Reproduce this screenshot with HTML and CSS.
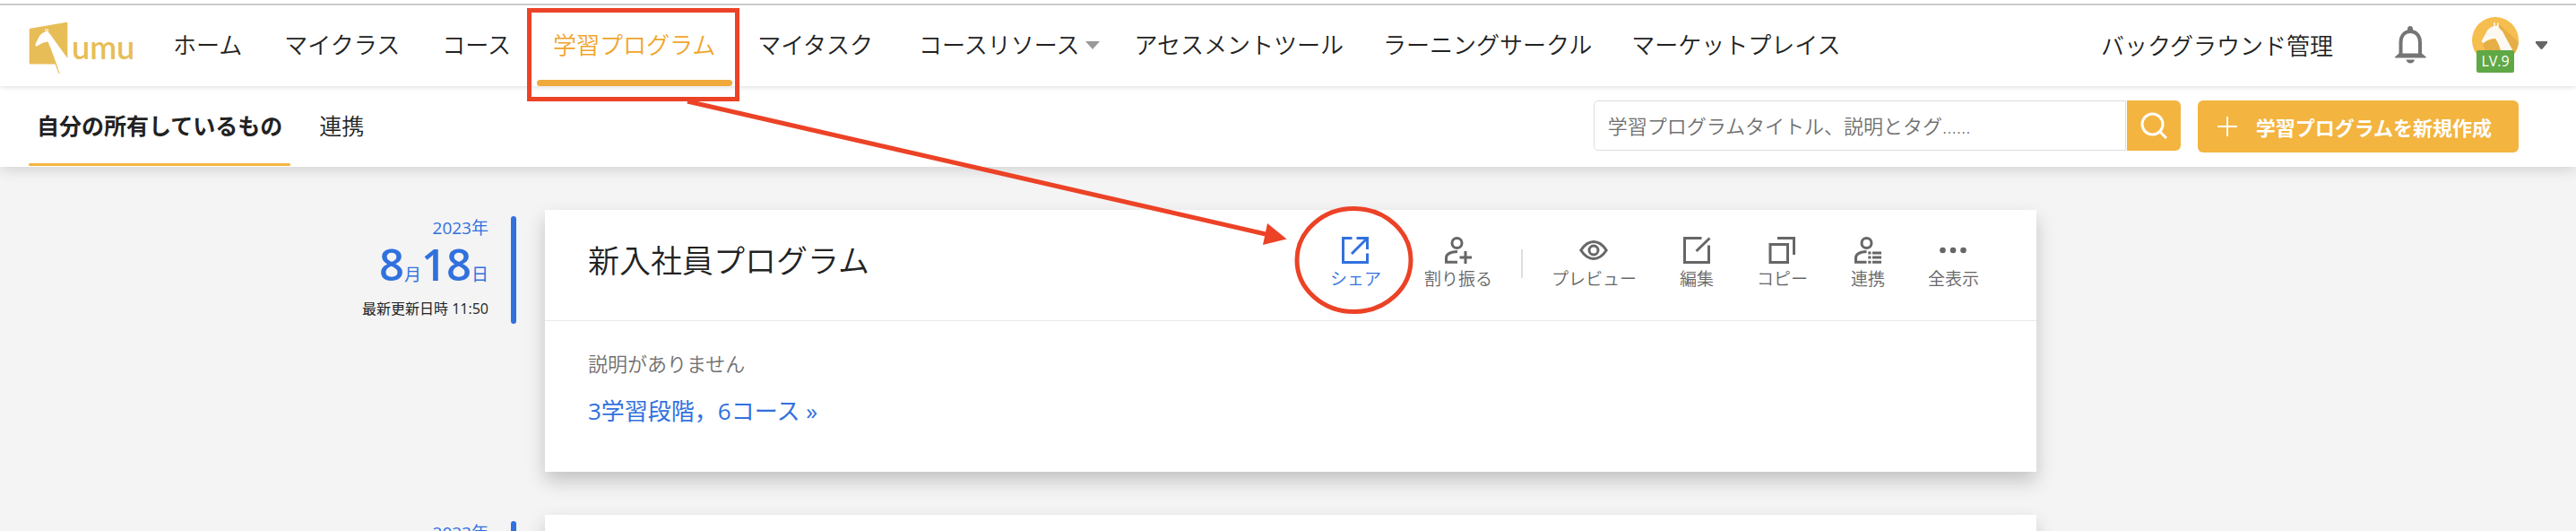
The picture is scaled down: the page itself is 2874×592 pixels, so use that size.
FILE: index.html
```html
<!DOCTYPE html>
<html lang="ja">
<head>
<meta charset="utf-8">
<title>学習プログラム</title>
<link rel="stylesheet" href="styles.css">
</head>
<body>
<header class="topbar">
  <a class="logo" href="#" aria-label="umu">
    <svg class="logo-mark" viewBox="38 43 131 175" aria-hidden="true"><path fill="#e7bd57" d="M40 70q0-3 3-4L164 45q3 0 3 3V165L110 86L103 78L102 67H98L99 76L95 75L96 67L92 68L93 77Q82 79 74 90L60 118Q59 127 67 124Q83 112 102 110Q120 152 141 216L138 216L126 184H43Q40 184 40 181Z"/></svg>
    <span class="logo-text">umu</span>
  </a>
  <nav class="nav">
    <a class="nav-item" href="#">ホーム</a>
    <a class="nav-item" href="#">マイクラス</a>
    <a class="nav-item" href="#">コース</a>
    <a class="nav-item nav-item-active" href="#" aria-current="page">学習プログラム</a>
    <a class="nav-item" href="#">マイタスク</a>
    <a class="nav-item nav-item-menu" href="#"><span>コースリソース</span><svg class="nav-caret" viewBox="0 0 16 9" aria-hidden="true"><path fill="#999" d="M0 0H16L8 9Z"/></svg></a>
    <a class="nav-item" href="#">アセスメントツール</a>
    <a class="nav-item" href="#">ラーニングサークル</a>
    <a class="nav-item" href="#">マーケットプレイス</a>
  </nav>
  <div class="account">
    <a class="admin-link" href="#">バックグラウンド管理</a>
    <button class="icon-button bell" type="button" aria-label="通知">
      <svg class="bell-icon" viewBox="0 0 35 42" aria-hidden="true"><g fill="#757575"><path d="M14 6V3.500a3 3.500 0 0 1 6 0V6Z"/><path d="M12.500 37.500h9.500q-1 4-4.750 4t-4.750-4Z"/><path d="M0 35.500V34.500L4.500 30.500H30L34.700 34.500V35.500Z"/></g><path d="M6.500 32V18.500C6.500 10.500 11 6 17.200 6S28 10.500 28 18.500V32" fill="none" stroke="#757575" stroke-width="4"/></svg>
    </button>
    <button class="icon-button profile" type="button" aria-label="アカウント">
      <span class="avatar">
        <svg class="avatar-icon" viewBox="0 0 52 52" aria-hidden="true"><defs><clipPath id="disc"><circle cx="26" cy="26" r="26"/></clipPath></defs><g clip-path="url(#disc)"><path fill="#f6bd4f" d="M0 0H52V52H0Z"/><path fill="#e6ae46" d="M29 7L52 28V42H16L12 29L25 24Z"/><path fill="#fdf9f2" d="M24 6L25.500 6L26 10L28 9.500V6.500H29.500L30 12L34 16L48 42H33Q31 31 26 24Q18 24 13 29Q10 29 11 26L17 15Q20 11 24.500 10Z"/></g></svg>
        <span class="level">LV.9</span>
      </span>
      <svg class="profile-caret" viewBox="0 0 13 9" aria-hidden="true"><path fill="#666" d="M0 0H13V2L8 8Q6.500 10 5 8L0 2Z"/></svg>
    </button>
  </div>
</header>

<div class="subbar">
  <nav class="tabs">
    <a class="tab tab-active" href="#" aria-current="page">自分の所有しているもの</a>
    <a class="tab" href="#">連携</a>
  </nav>
  <form class="tools">
    <div class="search">
      <input class="search-input" type="text" aria-label="検索" placeholder="学習プログラムタイトル、説明とタグ......">
      <button class="search-button" type="button" aria-label="検索する"><svg class="search-icon" viewBox="0 0 30 30" aria-hidden="true"><g fill="none" stroke="#fff" stroke-width="3"><circle cx="13.500" cy="13.500" r="11.500"/><path d="M21.500 21.500L29 29"/></g></svg></button>
    </div>
    <button class="create" type="button"><svg class="plus" viewBox="0 0 22 22" aria-hidden="true"><path d="M11 0V22M0 11H22" stroke="#fff" stroke-width="2"/></svg><span>学習プログラムを新規作成</span></button>
  </form>
</div>

<main class="list">
  <article class="entry">
    <div class="when">
      <div class="date">
        <div class="year">2023年</div>
        <div class="day"><b>8</b>月<b>18</b>日</div>
        <div class="updated">最新更新日時 11:50</div>
      </div>
      <div class="marker"></div>
    </div>
    <section class="card">
      <div class="card-head">
        <h2 class="card-title">新入社員プログラム</h2>
        <div class="actions">
          <button class="action action-share" type="button"><svg class="action-icon" viewBox="0 0 30 30" aria-hidden="true"><path d="M11.500 1.500H1.500V28.500H28.500V18.500M16.500 1.500H28.500V14M11 19L28 2"/></svg>シェア</button>
          <button class="action" type="button"><svg class="action-icon" viewBox="0 0 30 30" aria-hidden="true"><circle cx="13.500" cy="7" r="5.500"/><path d="M14 16.500C6 17 1.500 19.500 1.500 23.500V28.300H14M23 16V30M16.500 23H30"/></svg>割り振る</button>
          <span class="separator"></span>
          <button class="action" type="button"><svg class="action-icon" viewBox="0 0 30 30" aria-hidden="true"><path d="M.8 15C5 8.500 9.500 5.500 15 5.500S25 8.500 29.200 15C25 21.500 20.500 24.500 15 24.500S5 21.500 .8 15Z"/><circle cx="15" cy="15" r="5"/></svg>プレビュー</button>
          <button class="action" type="button"><svg class="action-icon" viewBox="0 0 30 30" aria-hidden="true"><path d="M20.500 1.500H1.500V28.500H28.500V9.500M14.500 16L29.500 1.500"/></svg>編集</button>
          <button class="action" type="button"><svg class="action-icon" viewBox="0 0 30 30" aria-hidden="true"><path d="M10 1.500H28.500V20"/><path d="M2 8.500H21.500V28.500H2Z"/></svg>コピー</button>
          <button class="action" type="button"><svg class="action-icon" viewBox="0 0 30 30" aria-hidden="true"><circle cx="13.500" cy="7" r="5.500"/><path d="M13.500 16.500C6 17 1.500 19.500 1.500 23.500V28.300H13.500M15.300 18H18.500M20 18H30M15.300 23H18.500M20 23H30M15.300 28.300H18.500M20 28.300H30"/></svg>連携</button>
          <button class="action" type="button"><svg class="action-icon" viewBox="0 0 30 30" aria-hidden="true"><g fill="#666" stroke="none"><circle cx="3.500" cy="15" r="3.300"/><circle cx="15" cy="15" r="3.300"/><circle cx="26.500" cy="15" r="3.300"/></g></svg>全表示</button>
        </div>
      </div>
      <div class="card-body">
        <p class="description">説明がありません</p>
        <a class="stages" href="#">3学習段階，6コース »</a>
      </div>
    </section>
  </article>
  <article class="entry">
    <div class="when">
      <div class="date">
        <div class="year">2023年</div>
      </div>
      <div class="marker"></div>
    </div>
    <section class="card">
      <div class="card-head"></div>
    </section>
  </article>
</main>

<svg class="annotations" width="1600" height="360" viewBox="0 0 1600 360" aria-hidden="true">
  <g fill="none" stroke="#ec4226" stroke-width="5">
    <rect x="590.500" y="11.500" width="232" height="99"/>
    <path d="M767 113L1412 261"/>
    <ellipse cx="1510.500" cy="290" rx="63.500" ry="57.500"/>
  </g>
  <path fill="#ec4226" d="M1435.500 266.500L1409 273L1414 249Z"/>
</svg>
</body>
</html>
```
FILE: styles.css
```css
* {
  box-sizing: border-box;
}

body {
  margin: 0;
  height: 100vh;
  overflow: hidden;
  background: #f4f4f4;
  color: #222;
  font-family: "Open Sans", "Noto Sans CJK JP", sans-serif;
  font-size: 26px;
  font-weight: 350;
}

a {
  color: inherit;
  text-decoration: none;
}

button {
  padding: 0;
  border: 0;
  background: none;
  color: inherit;
  font: inherit;
}

svg {
  display: block;
  flex: none;
}

.topbar {
  position: relative;
  display: flex;
  height: 96px;
  padding: 2px 32px 0;
  border-top: 4px solid #fff;
  background: #fff;
  box-shadow: inset 0 2px 0 #ccc, 0 1px 6px rgba(0, 0, 0, 0.14);
}

.logo {
  display: flex;
  gap: 4px;
  width: 138px;
  padding-top: 18px;
  color: #e7bd57;
}

.logo-mark {
  width: 44px;
  height: 59px;
}

.logo-text {
  padding-top: 4px;
  font-family: Lato, sans-serif;
  font-size: 36px;
  font-weight: 600;
  line-height: 48px;
}

.nav {
  display: flex;
}

.nav-item {
  margin: 0 5px;
  padding: 0 19px 0 18px;
  line-height: 88px;
  white-space: nowrap;
}

.nav-item-active {
  display: flex;
  flex-direction: column;
  color: #f0a52c;
}

.nav-item-active::after {
  content: "";
  height: 7px;
  margin: -5px -19px 0 -18px;
  border-radius: 4px;
  background: #efaa3b;
}

.nav-item-menu {
  display: flex;
  align-items: center;
  gap: 6px;
  height: 88px;
  padding: 0 12px 0 22px;
}

.nav-item-menu ~ .nav-item {
  padding: 0 17px;
}

.nav-caret {
  width: 16px;
  height: 9px;
}

.account {
  display: flex;
  align-items: center;
  height: 88px;
  margin-left: auto;
}

.admin-link {
  margin-right: 69px;
  white-space: nowrap;
}

.icon-button {
  display: flex;
  align-items: center;
}

.bell {
  margin-right: 51px;
}

.bell-icon {
  width: 35px;
  height: 42px;
}

.profile {
  gap: 19px;
}

.avatar {
  display: flex;
  flex-direction: column;
  align-items: center;
}

.avatar-icon {
  width: 52px;
  height: 52px;
}

.level {
  z-index: 1;
  width: 42px;
  height: 25px;
  margin-top: -15px;
  border-radius: 2px;
  background: #5fa846;
  color: #fff;
  font-size: 16px;
  font-weight: 400;
  line-height: 25px;
}

.profile-caret {
  width: 13px;
  height: 9px;
}

.subbar {
  display: flex;
  justify-content: space-between;
  height: 90px;
  padding: 0 64px 0 32px;
  background: #fff;
  box-shadow: 0 2px 16px rgba(0, 0, 0, 0.16);
}

.tabs {
  display: flex;
  gap: 23px;
  font-size: 25px;
}

.tab {
  padding: 0 9px;
  line-height: 88px;
  white-space: nowrap;
}

.tab-active {
  display: flex;
  flex-direction: column;
  font-weight: 700;
}

.tab-active::after {
  content: "";
  height: 3px;
  margin: -2px -9px 0;
  border-radius: 2px;
  background: #f3b440;
}

.tools {
  display: flex;
  gap: 19px;
  padding-top: 16px;
}

.search {
  display: flex;
  gap: 1px;
  height: 56px;
}

.search-input {
  width: 594px;
  padding: 0 15px;
  border: 1px solid #ddd;
  border-radius: 5px 0 0 5px;
  background: #fff;
  font: inherit;
  font-size: 22px;
}

.search-input::placeholder {
  color: #707070;
}

.search-button {
  display: grid;
  place-items: center;
  width: 60px;
  border-radius: 0 6px 6px 0;
  background: #f3b440;
}

.search-icon {
  width: 30px;
  height: 30px;
}

.create {
  display: flex;
  align-items: center;
  gap: 21px;
  height: 58px;
  padding: 0 30px 0 22px;
  border-radius: 6px;
  background: #f3b440;
  color: #fff;
  font-size: 22px;
  font-weight: 700;
  white-space: nowrap;
}

.plus {
  width: 22px;
  height: 22px;
}

.list {
  display: grid;
  gap: 48px;
  padding: 48px 0 48px 6px;
}

.entry {
  display: grid;
  grid-template-columns: 1fr minmax(0, 1664px) 1fr;
}

.when {
  display: flex;
  justify-content: flex-end;
  align-items: flex-start;
  gap: 25px;
  padding: 7px 32px 0 0;
}

.date {
  color: #3171de;
  font-size: 19px;
  font-weight: 400;
  line-height: 26px;
  text-align: right;
}

.day b {
  font-size: 49px;
  font-weight: 600;
  line-height: 54px;
}

.updated {
  color: #222;
  font-size: 16px;
  line-height: 46px;
}

.marker {
  width: 6px;
  height: 120px;
  border-radius: 3px;
  background: #3171de;
}

.card {
  background: #fff;
  box-shadow: 0 10px 20px rgba(0, 0, 0, 0.2);
}

.card-head {
  display: flex;
  align-items: center;
  justify-content: space-between;
  height: 124px;
  padding: 0 48px;
  border-bottom: 1px solid #e8e8e8;
}

.card-title {
  margin: 0;
  padding-bottom: 14px;
  font-size: 35px;
  font-weight: inherit;
}

.actions {
  display: flex;
  align-items: center;
  gap: 16px;
  padding-bottom: 4px;
}

.action {
  display: flex;
  flex-direction: column;
  align-items: center;
  gap: 4px;
  padding: 0 16px;
  color: #666;
  font-size: 19px;
  line-height: 26px;
}

.action-share {
  color: #3171de;
}

.action-icon {
  width: 30px;
  height: 30px;
  overflow: visible;
  fill: none;
  stroke: currentColor;
  stroke-width: 3;
}

.separator {
  width: 2px;
  height: 32px;
  background: #ddd;
}

.card-body {
  padding: 29px 48px 50px;
}

.description {
  margin: 0 0 17px;
  color: #707070;
  font-size: 22px;
  line-height: 36px;
}

.stages {
  display: block;
  color: #3171de;
  font-weight: 400;
  line-height: 36px;
}

.annotations {
  position: absolute;
  top: 0;
  left: 0;
  z-index: 2;
  pointer-events: none;
}
```
